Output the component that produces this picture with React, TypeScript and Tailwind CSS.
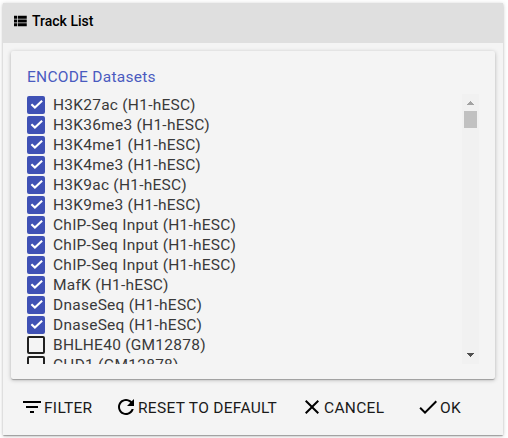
import React from "react";

const tracks: { name: string; checked: boolean }[] = [
  { name: "H3K27ac (H1-hESC)", checked: true },
  { name: "H3K36me3 (H1-hESC)", checked: true },
  { name: "H3K4me1 (H1-hESC)", checked: true },
  { name: "H3K4me3 (H1-hESC)", checked: true },
  { name: "H3K9ac (H1-hESC)", checked: true },
  { name: "H3K9me3 (H1-hESC)", checked: true },
  { name: "ChIP-Seq Input (H1-hESC)", checked: true },
  { name: "ChIP-Seq Input (H1-hESC)", checked: true },
  { name: "ChIP-Seq Input (H1-hESC)", checked: true },
  { name: "MafK (H1-hESC)", checked: true },
  { name: "DnaseSeq (H1-hESC)", checked: true },
  { name: "DnaseSeq (H1-hESC)", checked: true },
  { name: "BHLHE40 (GM12878)", checked: false },
  { name: "CHD1 (GM12878)", checked: false },
];

const icons = {
  list: "M4 14h4v-4H4v4zm0 5h4v-4H4v4zM4 9h4V5H4v4zm5 5h12v-4H9v4zm0 5h12v-4H9v4zM9 5v4h12V5H9z",
  filter: "M10 18h4v-2h-4v2zM3 6v2h18V6H3zm3 7h12v-2H6v2z",
  refresh:
    "M17.65 6.35C16.2 4.9 14.21 4 12 4c-4.42 0-7.99 3.58-7.99 8s3.57 8 7.99 8c3.73 0 6.84-2.55 7.73-6h-2.08c-.82 2.33-3.04 4-5.65 4-3.31 0-6-2.69-6-6s2.69-6 6-6c1.66 0 3.14.69 4.22 1.78L13 11h7V4l-2.35 2.35z",
  close:
    "M19 6.41L17.59 5 12 10.59 6.41 5 5 6.41 10.59 12 5 17.59 6.41 19 12 13.41 17.59 19 19 17.59 13.41 12z",
  check: "M9 16.17L4.83 12l-1.42 1.41L9 19 21 7l-1.41-1.41z",
};

function Icon({ path, className }: { path: string; className: string }) {
  return (
    <svg viewBox="0 0 24 24" fill="currentColor" className={`shrink-0 ${className}`}>
      <path d={path} />
    </svg>
  );
}

function Checkbox({ checked }: { checked: boolean }) {
  if (!checked) {
    return <span className="size-[18px] shrink-0 rounded-xs border-2 border-[#212121]" />;
  }
  return (
    <span className="flex size-[18px] shrink-0 items-center justify-center rounded-xs bg-[#3f51b5]">
      <svg viewBox="0 0 18 18" className="size-[18px]" fill="none" stroke="#fff" strokeWidth="2.1">
        <path d="M4.4 8.2l3.5 3.4 7.2-6.9" />
      </svg>
    </span>
  );
}

function Action({ path, label, className }: { path: string; label: string; className: string }) {
  return (
    <button className={`flex h-6 items-center whitespace-nowrap ${className}`}>
      <Icon path={path} className="size-6" />
      <span className="pt-px tracking-[0.3px] text-[#1a1a1a]">{label}</span>
    </button>
  );
}

export default function App() {
  return (
    <div className="h-[438px] w-[508px] overflow-hidden bg-white pt-[3px] pl-[3px] font-[Roboto,sans-serif] text-black">
      <div className="flex h-[432px] w-[500px] flex-col bg-[#f4f4f4] shadow-[0_1px_4px_rgba(0,0,0,0.25),0_1px_1px_rgba(0,0,0,0.14),0_2px_1px_-1px_rgba(0,0,0,0.12)]">
        <header className="flex h-10 shrink-0 items-center bg-[#dfdfdf] pb-1 pl-2">
          <Icon path={icons.list} className="size-[18px]" />
          <h1 className="ml-[3px] text-[14px] leading-5 font-medium">Track List</h1>
        </header>
        <main className="mx-2 mt-2 flex h-[328px] shrink-0 flex-col rounded-xs pt-4 pl-4 shadow-[0_1px_4px_rgba(0,0,0,0.25),0_1px_1px_rgba(0,0,0,0.14),0_2px_1px_-1px_rgba(0,0,0,0.12)]">
          <h2 className="h-[27px] text-[15.5px] leading-5 tracking-[0.26px] text-[#4a5bc0]">
            ENCODE Datasets
          </h2>
          <div className="flex h-[270px] w-[452px] overflow-hidden">
            <ul className="flex-1 pt-px">
              {tracks.map((t, i) => (
                <li key={i} className="flex h-5 items-center gap-2">
                  <Checkbox checked={t.checked} />
                  <span className="text-[15.5px] leading-5 tracking-[0.25px] whitespace-nowrap text-[#3a3a3a]">
                    {t.name}
                  </span>
                </li>
              ))}
            </ul>
            <div className="flex w-[17px] flex-col items-center bg-[#f1f1f1]">
              <svg viewBox="0 0 7 4" className="mt-[7px] h-1 w-[7px]" fill="#a3a3a3">
                <path d="M3 0h1v1h1v1h1v1h1v1H0V3h1V2h1V1h1z" />
              </svg>
              <span className="mt-[6px] h-[17px] w-[13px] bg-[#c1c1c1]" />
              <svg viewBox="0 0 7 4" className="mt-auto mb-[7px] h-1 w-[7px]" fill="#505050">
                <path d="M0 0h7v1H6v1H5v1H4v1H3V3H2V2H1V1H0z" />
              </svg>
            </div>
          </div>
        </main>
        <footer className="flex pt-4 pl-[17px] text-[15.5px] leading-6">
          <Action path={icons.filter} label="FILTER" className="w-[94px]" />
          <Action path={icons.refresh} label="RESET TO DEFAULT" className="w-[186px]" />
          <Action path={icons.close} label="CANCEL" className="w-[116px]" />
          <Action path={icons.check} label="OK" className="w-[60px]" />
        </footer>
      </div>
    </div>
  );
}
